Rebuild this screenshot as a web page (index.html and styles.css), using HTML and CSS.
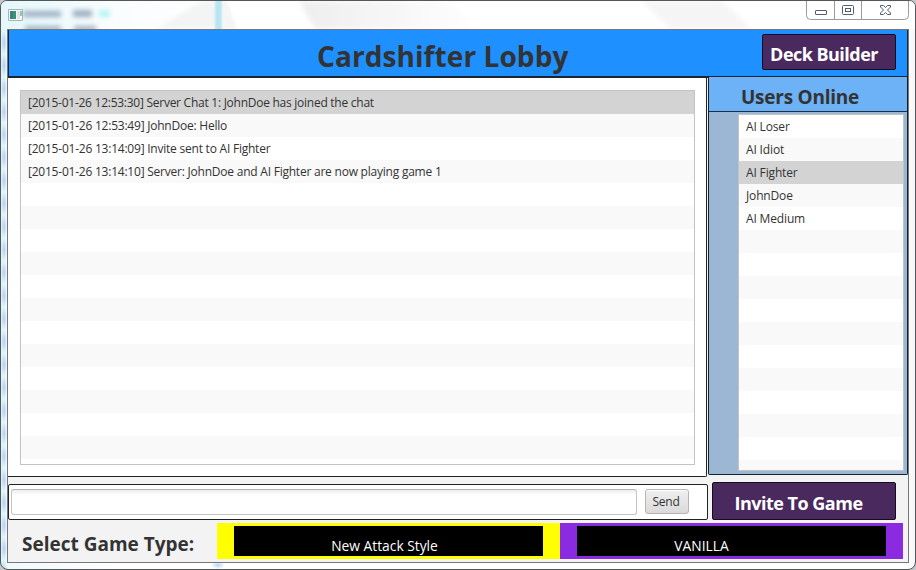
FILE: index.html
```html
<!DOCTYPE html>
<html lang="en">
<head>
<meta charset="utf-8">
<title>Cardshifter Lobby</title>
<link rel="stylesheet" href="styles.css">
</head>
<body>
<div class="window">
  <div class="titlebar">
    <svg class="glass" width="914" height="28" viewBox="0 0 914 28" aria-hidden="true">
      <defs>
        <filter id="soft" x="-20%" y="-50%" width="140%" height="200%"><feGaussianBlur stdDeviation="2.5"/></filter>
        <filter id="edge" x="-50%" y="-20%" width="200%" height="140%"><feGaussianBlur stdDeviation="1"/></filter>
        <linearGradient id="sheen"><stop offset="0" stop-color="#eeeeee"/><stop offset="1" stop-color="#fff"/></linearGradient>
      </defs>
      <path d="M155 28L200 0H216V28Z" fill="#f3f4f4" filter="url(#soft)"/>
      <path d="M222 0H226L236 28H222Z" fill="#f5f5f5" filter="url(#edge)"/>
      <path d="M298 0H450L482 28H314Z" fill="url(#sheen)" filter="url(#soft)"/>
      <path d="M640 0H722L750 28H670Z" fill="#f5f5f5" filter="url(#soft)"/>
      <path d="M214 -4h7v36h-7z" fill="#b9e4f2" filter="url(#edge)"/>
      <g filter="url(#soft)"><path d="M22 10h38v6H22zM72 9h19v7H72zM24 25h36v5H24zM73 25h22v5H73z" fill="#9fb0c2"/><path d="M98 9h11v7H98z" fill="#b8f4f1"/></g>
    </svg>
    <svg class="app-icon" width="16" height="14" viewBox="0 0 16 14" aria-hidden="true">
      <path d="M.5 1.500h14v11H.5z" fill="#f8fbfb" stroke="#a9b3b6"/>
      <path d="M2 3h6v8H2z" fill="#39966c"/><path d="M2 3h3v8H2z" fill="#37779c" opacity=".6"/>
      <path d="M9 3h3v8H9z" fill="#dfe4e4"/><path d="M12 3h2v5h-2z" fill="#8ec8ae"/>
    </svg>
    <div class="controls">
      <svg width="103" height="19" viewBox="0 0 103 19" aria-hidden="true">
        <path d="M.5 0V14.500Q.5 18.500 4.500 18.500H98.500Q102.500 18.500 102.500 14.500V0M28.500 0V18M55.500 0V18" fill="none" stroke="#9b9b9b"/>
        <g fill="#fff" stroke="#555b6e">
          <rect x="9.500" y="9.500" width="11" height="4" rx=".5"/>
          <rect x="36.500" y="4.500" width="11" height="9" rx="1"/>
          <rect x="39.500" y="7.500" width="5" height="3"/>
          <path d="M74.500 4.500h3l2 2 2-2h3v1.500l-3 3 3 3v1.500h-3l-2-2-2 2h-3V12l3-3-3-3Z"/>
        </g>
      </svg>
    </div>
  </div>
  <main class="client">
    <header class="header">
      <h1>Cardshifter Lobby</h1>
      <button class="purple deck">Deck Builder</button>
    </header>
    <div class="middle">
      <section class="chat">
        <ul class="list messages">
          <li class="selected joined">[2015-01-26 12:53:30] Server Chat 1: JohnDoe has joined the chat</li>
          <li>[2015-01-26 12:53:49] JohnDoe: Hello</li>
          <li>[2015-01-26 13:14:09] Invite sent to AI Fighter</li>
          <li>[2015-01-26 13:14:10] Server: JohnDoe and AI Fighter are now playing game 1</li>
        </ul>
      </section>
      <section class="users">
        <h2>Users Online</h2>
        <ul class="list people">
          <li>AI Loser</li>
          <li>AI Idiot</li>
          <li class="selected">AI Fighter</li>
          <li>JohnDoe</li>
          <li>AI Medium</li>
        </ul>
      </section>
    </div>
    <div class="actions">
      <form class="composer">
        <input type="text" aria-label="Message">
        <button type="button" class="send">Send</button>
      </form>
      <button class="purple invite">Invite To Game</button>
    </div>
    <div class="types">
      <div class="types-label">Select Game Type:</div>
      <div class="type yellow"><button>New Attack Style</button></div>
      <div class="type violet"><button>VANILLA</button></div>
    </div>
  </main>
</div>
</body>
</html>
```
FILE: styles.css
```css
* { box-sizing: border-box; }
html { background: #c4c7ca; }
body { margin: 0; font-family: "Open Sans", "Noto Sans", sans-serif; font-size: 12px; color: #333; }
button, input { font-family: inherit; padding: 0; margin: 0; }
h1, h2, ul { margin: 0; padding: 0; }
.window {
  width: 916px; height: 570px; padding: 0 6px 7px 6px; overflow: hidden;
  border: 1px solid #55565a; border-radius: 7px 7px 8px 8px;
  background:
    radial-gradient(ellipse at center, #b9d3f8, #b9d3f800 70%) 210px 100% / 14px 8px no-repeat,
    radial-gradient(ellipse at center, #b8cdf0, #b8cdf000 75%) 0 30px / 6px 23px repeat-y,
    linear-gradient(90deg, #dcf5fa 0, #f0fafd 7px, #fff 120px, #fff 900px, #f7f7f7);
}
.titlebar { position: relative; height: 28px; margin: 0 -6px; display: flex; justify-content: space-between; padding: 0 6px 0 7px; background: linear-gradient(90deg, #e4f7fb, #fafdfe 120px, #fff 220px); }
.glass { position: absolute; left: 0; top: 0; }
.app-icon { position: relative; margin-top: 7px; }
.controls { position: relative; height: 19px; }
.controls svg { display: block; }
.client { height: 534px; border: 1px solid #777; background: #f3f3f3; display: flex; flex-direction: column; }
.header {
  flex: none; height: 48px; background: #1e90ff; border: solid #1b2530; border-width: 0 1px 2px;
  display: grid; grid-template-columns: 308px 1fr 134px; padding-right: 11px;
}
h1 { grid-column: 2; font-size: 28px; letter-spacing: .08px; line-height: 36px; padding-top: 8px; font-weight: 700; white-space: nowrap; }
.purple { background: #4a2a5e; border: 1px solid #160c20; border-radius: 2px; color: #fff; font-weight: 700; font-size: 18px; letter-spacing: -.53px; white-space: nowrap; }
.deck { height: 36px; margin-top: 4px; line-height: 26px; padding: 4px 10px 0 0; }
.middle { flex: none; height: 399px; display: flex; align-items: flex-start; gap: 1px; }
.chat { width: 699px; height: 399px; padding: 12px 11px 11px 12px; background: #fff; border: solid #222; border-width: 0 1px 1px 0; border-radius: 0 0 2px 0; }
.list { list-style: none; border: 1px solid #c3c3c3; background: repeating-linear-gradient(#fff 0 23px, #f9f9f9 23px 46px); }
.list li { height: 23px; line-height: 23px; padding-left: 7px; white-space: nowrap; }
.list .selected { background: #d3d3d3; }
.messages { width: 675px; height: 375px; letter-spacing: -.225px; }
.messages .joined { letter-spacing: -.26px; }
.users { width: 200px; height: 398px; margin-top: -1px; background: #9bb7d4; border: 1px solid #13202e; border-top: 0; border-radius: 0 0 2px 2px; }
h2 { height: 35px; line-height: 26px; padding: 7px 0 0 32px; font-size: 19px; letter-spacing: -.25px; background: #6db1f6; border-bottom: 1px solid #173148; white-space: nowrap; }
.people { height: 357px; margin: 2px 3px 0 29px; letter-spacing: -.15px; }
.actions { flex: none; display: flex; height: 39px; margin-top: 5px; gap: 4px; }
.composer { width: 700px; height: 36px; margin-top: 2px; background: #fff; border: 1px solid #222; border-radius: 2px; display: flex; padding: 4px 2px; gap: 8px; }
.composer input { width: 626px; height: 26px; border: 1px solid #c4c4c4; border-top-color: #b5b5b5; border-radius: 3px; background: linear-gradient(#ededed, #fff 5px); }
.send { width: 44px; height: 25px; border: 1px solid #b5b5b5; border-radius: 3px; background: linear-gradient(#efefef, #dadada); box-shadow: inset 0 1px #fff; color: #333; font-size: 12px; letter-spacing: -.2px; padding-right: 2px; }
.invite { width: 184px; height: 38px; padding: 4px 11px 0 0; line-height: 26px; letter-spacing: -.5px; }
.types { flex: none; display: flex; height: 36px; margin-top: 2px; }
.types-label { width: 209px; padding: 8px 0 0 14px; font-size: 19px; line-height: 27px; font-weight: 700; white-space: nowrap; }
.type { width: 343px; height: 36px; padding: 3px 17px; }
.type button { display: block; width: 309px; height: 30px; border: 0; background: #000; color: #fff; font-size: 13.800px; padding: 9px 8px 0 0; line-height: 20px; }
.yellow { background: #ff0; }
.violet { background: #8a2be2; }
.violet button { padding-right: 60px; }
```
